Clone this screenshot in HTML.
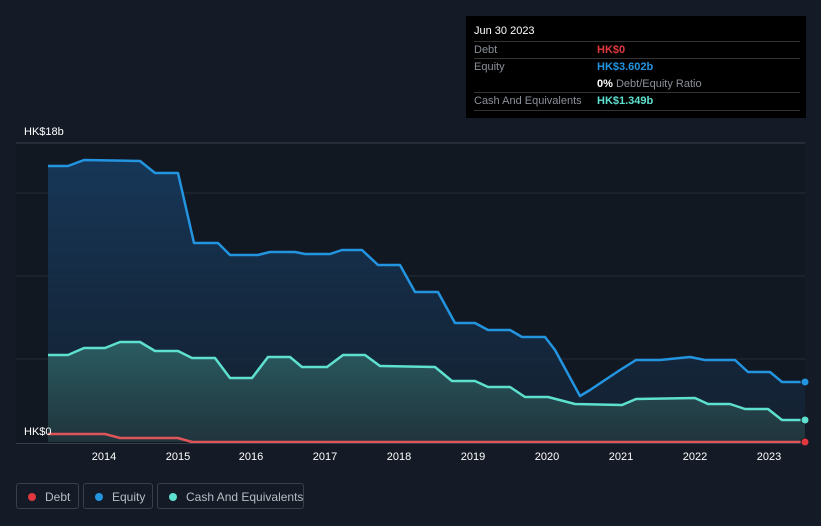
<!DOCTYPE html><html><head><meta charset="utf-8"><style>
html,body{margin:0;width:821px;height:526px;overflow:hidden}
body{background:#151b26;font-family:"Liberation Sans",sans-serif;position:relative}
.tip{position:absolute;left:466px;top:16px;width:340px;height:102px;background:#000}
.tip .r{position:absolute;left:8px;width:326px;font-size:11px;color:#8a9099;border-top:1px solid #333}
.leg{position:absolute;top:483px;height:26px;border:1px solid #3a404b;border-radius:3px;color:#b8bcc3;font-size:12px;line-height:26px;box-sizing:border-box;white-space:nowrap}
.leg i{position:absolute;left:11px;top:9px;width:8px;height:8px;border-radius:50%}
</style></head><body>
<svg width="821" height="526" style="position:absolute;left:0;top:0">
<defs>
<linearGradient id="eq" x1="0" y1="0" x2="0" y2="1"><stop offset="0" stop-color="#173a5e" stop-opacity=".9"/><stop offset="1" stop-color="#14263a" stop-opacity=".6"/></linearGradient>
<linearGradient id="ca" x1="0" y1="0" x2="0" y2="1"><stop offset="0" stop-color="#2c6266" stop-opacity=".9"/><stop offset="1" stop-color="#24393f" stop-opacity=".8"/></linearGradient>
</defs>
<rect x="16" y="143" width="789" height="300" fill="#121822"/>
<line x1="16" y1="143" x2="805" y2="143" stroke="#3a404b"/>
<g stroke="#262c36"><line x1="16" y1="193" x2="805" y2="193"/><line x1="16" y1="276" x2="805" y2="276"/><line x1="16" y1="359" x2="805" y2="359"/></g>
<path fill="url(#eq)" d="M48,166L68,166L84,160L140,161L155,173L178,173L194,243L218,243L230,255L258,255L270,252L295,252L305,254L330,254L342,250L362,250L378,265L400,265L415,292L438,292L455,323L475,323L488,330L510,330L522,337L545,337L555,350L580,396L590,390L620,370L636,360L660,360L690,357L705,360L735,360L748,372L770,372L782,382L805,382L805,442L48,442Z"/>
<path fill="url(#ca)" d="M48,355L68,355L84,348L105,348L120,342L140,342L155,351L178,351L192,358L215,358L230,378L252,378L268,357L290,357L302,367L327,367L343,355L365,355L380,366L435,367L452,381L475,381L488,387L510,387L525,397L548,397L575,404L622,405L636,399L695,398L708,404L730,404L745,409L768,409L782,420L805,420L805,442L48,442Z"/>
<path fill="none" stroke="#2394e0" stroke-width="2.5" stroke-linejoin="round" d="M48,166L68,166L84,160L140,161L155,173L178,173L194,243L218,243L230,255L258,255L270,252L295,252L305,254L330,254L342,250L362,250L378,265L400,265L415,292L438,292L455,323L475,323L488,330L510,330L522,337L545,337L555,350L580,396L590,390L620,370L636,360L660,360L690,357L705,360L735,360L748,372L770,372L782,382L805,382"/>
<path fill="none" stroke="#5ee0cf" stroke-width="2.5" stroke-linejoin="round" d="M48,355L68,355L84,348L105,348L120,342L140,342L155,351L178,351L192,358L215,358L230,378L252,378L268,357L290,357L302,367L327,367L343,355L365,355L380,366L435,367L452,381L475,381L488,387L510,387L525,397L548,397L575,404L622,405L636,399L695,398L708,404L730,404L745,409L768,409L782,420L805,420"/>
<path fill="none" stroke="#e0555a" stroke-width="2.5" d="M48,434L105,434L120,438L178,438L192,442L805,442"/>
<line x1="16" y1="443.5" x2="805" y2="443.5" stroke="#3a404b"/>
<circle cx="805" cy="382" r="4" fill="#2394e0" stroke="#151b26"/>
<circle cx="805" cy="420" r="4" fill="#5ee0cf" stroke="#151b26"/>
<circle cx="805" cy="442" r="4" fill="#e0383e" stroke="#151b26"/>
<g fill="#fff" font-size="11" font-family="Liberation Sans" text-anchor="middle">
<text x="104" y="460">2014</text><text x="178" y="460">2015</text><text x="251" y="460">2016</text><text x="325" y="460">2017</text><text x="399" y="460">2018</text><text x="473" y="460">2019</text><text x="547" y="460">2020</text><text x="621" y="460">2021</text><text x="695" y="460">2022</text><text x="769" y="460">2023</text>
</g>
<g fill="#fff" font-size="11" font-family="Liberation Sans"><text x="24" y="135">HK$18b</text><text x="24" y="435">HK$0</text></g>
</svg>
<div class="tip">
<div style="position:absolute;left:8px;top:9px;color:#fff;font-size:11px">Jun 30 2023</div>
<div class="r" style="top:25px;height:17px;line-height:16px">Debt<span style="position:absolute;left:123px;color:#e0383e;font-weight:bold">HK$0</span></div>
<div class="r" style="top:42px;height:34px;line-height:16px">Equity<span style="position:absolute;left:123px;color:#2394e0;font-weight:bold">HK$3.602b</span><br><span style="position:absolute;left:123px;top:17px"><b style="color:#fff">0%</b> Debt/Equity Ratio</span></div>
<div class="r" style="top:76px;height:17px;line-height:16px;border-bottom:1px solid #333">Cash And Equivalents<span style="position:absolute;left:123px;color:#5ee0cf;font-weight:bold">HK$1.349b</span></div>
</div>
<div class="leg" style="left:16px;width:63px"><i style="background:#e0383e"></i><span style="position:absolute;left:28px">Debt</span></div>
<div class="leg" style="left:83px;width:70px"><i style="background:#2394e0"></i><span style="position:absolute;left:28px">Equity</span></div>
<div class="leg" style="left:157px;width:147px"><i style="background:#5ee0cf"></i><span style="position:absolute;left:28px">Cash And Equivalents</span></div>
</body></html>
